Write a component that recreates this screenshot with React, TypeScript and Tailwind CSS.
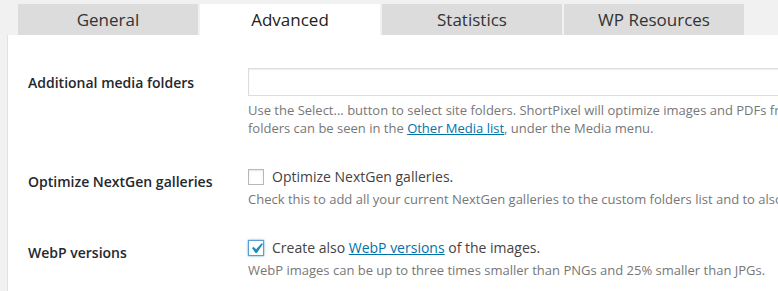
import React from "react";

const tabs = ["General", "Advanced", "Statistics", "WP Resources"];

const Check: React.FC<{ checked?: boolean }> = ({ checked }) => (
  <span
    className={
      "flex h-4 w-4 shrink-0 items-center justify-center overflow-visible border bg-white " +
      (checked
        ? "border-[#5b9dd9] shadow-[0_0_2px_rgba(30,140,190,0.8)]"
        : "border-[#b4b9be] shadow-[inset_0_1px_2px_rgba(0,0,0,0.1)]")
    }
  >
    {checked && (
      <svg width="21" height="21" viewBox="0 0 20 20" className="-m-[3px] shrink-0">
        <path
          d="M14.83 4.89l1.34.94-5.81 8.38H9.02L5.78 9.67l1.34-1.25 2.57 2.4z"
          fill="#1e8cbe"
        />
      </svg>
    )}
  </span>
);

export default function App() {
  return (
    <div className="h-[291px] w-[778px] overflow-hidden bg-[#f1f1f1] font-['Open_Sans',sans-serif] text-[#23282d]">
      <div className="flex gap-[2px] pl-[18px] pt-[4px]">
        {tabs.map((t) => (
          <div
            key={t}
            className={
              "flex h-[31px] w-[180px] items-center justify-center text-[17px] " +
              (t === "Advanced" ? "bg-white text-[#222]" : "bg-[#dcdcdc] text-[#333]")
            }
          >
            {t}
          </div>
        ))}
      </div>

      <div className="ml-[7px] border-l border-[#e2e2e2] bg-white pl-[20px] pt-[18px]">
        {/* Additional media folders */}
        <div className="flex">
          <div className="w-[220px] shrink-0 py-[20px] text-[14px] font-semibold leading-[20px]">
            Additional media folders
          </div>
          <div className="py-[15px]">
            <div className="h-[28px] w-[600px] border border-[#ddd] shadow-[inset_0_1px_2px_rgba(0,0,0,0.07)]" />
            <p className="mt-[5px] whitespace-nowrap text-[13px] leading-[18px] text-[#777]">
              Use the Select... button to select site folders. ShortPixel will optimize images and PDFs from the specified folders and their subfolders. The optimized
              <br />
              folders can be seen in the{" "}
              <a className="text-[#0073aa] underline" href="#">
                Other Media list
              </a>
              , under the Media menu.
            </p>
          </div>
        </div>

        {/* NextGen */}
        <div className="flex">
          <div className="w-[220px] shrink-0 py-[20px] text-[14px] font-semibold leading-[20px]">
            Optimize NextGen galleries
          </div>
          <div className="py-[15px]">
            <label className="flex h-[20px] items-center gap-[8px] text-[14px] leading-[20px] text-[#444]">
              <Check />
              Optimize NextGen galleries.
            </label>
            <p className="mt-[3px] whitespace-nowrap text-[13px] leading-[18px] text-[#777]">
              Check this to add all your current NextGen galleries to the custom folders list and to also have all the future NextGen galleries and images optimized
            </p>
          </div>
        </div>

        {/* WebP */}
        <div className="flex">
          <div className="w-[220px] shrink-0 py-[20px] text-[14px] font-semibold leading-[20px]">
            WebP versions
          </div>
          <div className="py-[15px]">
            <label className="flex h-[20px] items-center gap-[8px] text-[14px] leading-[20px] text-[#444]">
              <Check checked />
              <span>
                Create also{" "}
                <a className="text-[#0073aa] underline" href="#">
                  WebP versions
                </a>{" "}
                of the images.
              </span>
            </label>
            <p className="mt-[3px] whitespace-nowrap text-[13px] leading-[18px] text-[#777]">
              WebP images can be up to three times smaller than PNGs and 25% smaller than JPGs.
            </p>
          </div>
        </div>
      </div>
    </div>
  );
}
